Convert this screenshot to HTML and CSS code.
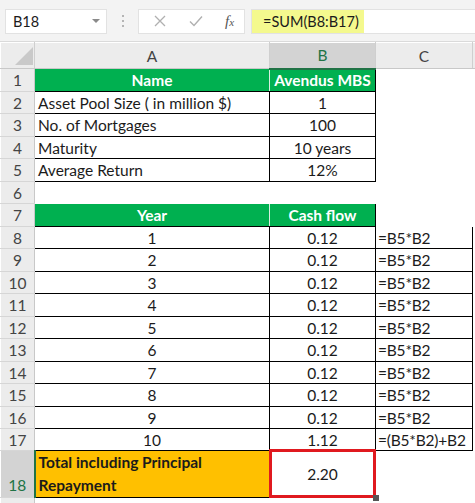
FILE: index.html
```html
<!DOCTYPE html>
<html lang="en">

<head>
    <meta charset="UTF-8">
    <meta name="viewport" content="width=device-width, initial-scale=1.0">
    <title>Avendus MBS</title>
    <link rel="stylesheet" href="styles.css">
</head>

<body>
    <div class="formula-bar">
        <div class="name-box">
            <span>B18</span>
            <svg class="drop" width="8" height="5" viewBox="0 0 8 5"><polygon points="0,0 8,0 4,4" fill="#8a8a8a"/></svg>
        </div>
        <div class="grip"><i></i><i></i><i></i></div>
        <div class="fx-buttons">
            <svg width="12" height="12" viewBox="0 0 12 12"><path d="M1 1 L11 11 M11 1 L1 11" stroke="#b0b0b0" stroke-width="1.3" fill="none"/></svg>
            <svg width="14" height="12" viewBox="0 0 14 12"><path d="M1 6.5 L5 10.5 L13 1.5" stroke="#b0b0b0" stroke-width="1.4" fill="none"/></svg>
            <span class="fx">f<small>x</small></span>
        </div>
        <div class="formula-input">
            <span class="formula-text">=SUM(B8:B17)</span>
        </div>
    </div>

    <table class="sheet">
        <colgroup>
            <col style="width:34px">
            <col style="width:235px">
            <col style="width:106px">
            <col style="width:97px">
            <col style="width:3px">
        </colgroup>
        <tr class="col-head">
            <th class="corner"><svg width="18" height="18" viewBox="0 0 18 18"><polygon points="18,0 18,18 0,18" fill="#c9c9c9"/></svg></th>
            <th>A</th>
            <th class="sel-col">B</th>
            <th>C</th>
            <th></th>
        </tr>
        <tr class="r23">
            <th class="rh">1</th>
            <td class="head head-a">Name</td>
            <td class="head head-b">Avendus MBS</td>
            <td></td><td></td>
        </tr>
        <tr class="r22">
            <th class="rh">2</th>
            <td class="box">Asset Pool Size ( in million $)</td>
            <td class="box num">1</td>
            <td></td><td></td>
        </tr>
        <tr class="r23">
            <th class="rh">3</th>
            <td class="box">No. of Mortgages</td>
            <td class="box num">100</td>
            <td></td><td></td>
        </tr>
        <tr class="r22">
            <th class="rh">4</th>
            <td class="box">Maturity</td>
            <td class="box num">10 years</td>
            <td></td><td></td>
        </tr>
        <tr class="r23">
            <th class="rh">5</th>
            <td class="box">Average Return</td>
            <td class="box num">12%</td>
            <td></td><td></td>
        </tr>
        <tr class="r22">
            <th class="rh">6</th>
            <td></td><td></td><td></td><td></td>
        </tr>
        <tr class="r23">
            <th class="rh">7</th>
            <td class="head head-a">Year</td>
            <td class="head head-b">Cash flow</td>
            <td></td><td></td>
        </tr>
        <tr class="r22"><th class="rh">8</th><td class="box num">1</td><td class="box num">0.12</td><td class="box formula">=B5*B2</td><td></td></tr>
        <tr class="r23"><th class="rh">9</th><td class="box num">2</td><td class="box num">0.12</td><td class="box formula">=B5*B2</td><td></td></tr>
        <tr class="r22"><th class="rh">10</th><td class="box num">3</td><td class="box num">0.12</td><td class="box formula">=B5*B2</td><td></td></tr>
        <tr class="r23"><th class="rh">11</th><td class="box num">4</td><td class="box num">0.12</td><td class="box formula">=B5*B2</td><td></td></tr>
        <tr class="r22"><th class="rh">12</th><td class="box num">5</td><td class="box num">0.12</td><td class="box formula">=B5*B2</td><td></td></tr>
        <tr class="r23"><th class="rh">13</th><td class="box num">6</td><td class="box num">0.12</td><td class="box formula">=B5*B2</td><td></td></tr>
        <tr class="r22"><th class="rh">14</th><td class="box num">7</td><td class="box num">0.12</td><td class="box formula">=B5*B2</td><td></td></tr>
        <tr class="r23"><th class="rh">15</th><td class="box num">8</td><td class="box num">0.12</td><td class="box formula">=B5*B2</td><td></td></tr>
        <tr class="r22"><th class="rh">16</th><td class="box num">9</td><td class="box num">0.12</td><td class="box formula">=B5*B2</td><td></td></tr>
        <tr class="r22"><th class="rh">17</th><td class="box num">10</td><td class="box num">1.12</td><td class="box formula">=(B5*B2)+B2</td><td></td></tr>
        <tr class="r47">
            <th class="rh sel-row">18</th>
            <td class="total-label">Total including Principal<br>Repayment</td>
            <td class="num total"><span>2.20</span></td>
            <td></td><td></td>
        </tr>
        <tr class="r22"><th class="rh"></th><td></td><td></td><td></td><td></td></tr>
    </table>
</body>

</html>
```

FILE: styles.css
```css
* {
    box-sizing: border-box;
}

body {
    margin: 0;
    padding: 0;
    width: 475px;
    height: 503px;
    overflow: hidden;
    background: #ffffff;
    font-family: Lato, "Liberation Sans", sans-serif;
    color: #1b1b1b;
}

/* formula bar */

.formula-bar {
    display: flex;
    align-items: center;
    height: 42px;
    padding: 9px 0 8px 5px;
    background: #f3f3f3;
    border-bottom: 1px solid #dadada;
}

.name-box {
    display: flex;
    align-items: center;
    justify-content: space-between;
    width: 102px;
    height: 25px;
    padding: 0 6px 0 7px;
    background: #ffffff;
    border: 1px solid #e2e2e2;
    font-size: 14.5px;
}

.grip {
    display: flex;
    flex-direction: column;
    gap: 3px;
    margin: 0 14px 0 15px;
}

.grip i {
    display: block;
    width: 2px;
    height: 2px;
    background: #b4b4b4;
}

.fx-buttons {
    display: flex;
    align-items: center;
    width: 107px;
    height: 25px;
    padding-left: 15px;
    gap: 23px;
    background: #ffffff;
    border: 1px solid #e2e2e2;
}

.fx {
    font-family: "Liberation Serif", serif;
    font-style: italic;
    font-size: 15px;
    color: #555555;
    margin-left: -1px;
}

.fx small {
    font-size: 11px;
}

.formula-input {
    flex: 1;
    height: 25px;
    margin-left: 6px;
    background: #ffffff;
    border: 1px solid #e2e2e2;
    border-right: none;
}

.formula-text {
    display: inline-block;
    height: 100%;
    width: 112px;
    padding: 3px 0 0 11px;
    background: #f4f98e;
    font-size: 14.5px;
}

/* sheet */

.sheet {
    table-layout: fixed;
    border-collapse: collapse;
    width: 475px;
    font-size: 15.5px;
}

.sheet td,
.sheet th {
    padding: 0 3px;
    white-space: nowrap;
    overflow: hidden;
    border: 1px solid transparent;
}

.col-head {
    height: 26px;
}

.col-head th {
    background: #ececec;
    font-weight: normal;
    color: #444444;
    border-right: 1px solid #cfcfcf;
    border-bottom: 1px solid #c8c8c8;
}

.col-head .corner {
    text-align: right;
    vertical-align: bottom;
    padding: 0 1px 3px 0;
}

.col-head .corner svg {
    display: block;
    margin-left: auto;
}

.col-head .sel-col {
    background: #d3d3d3;
    color: #217346;
    border-bottom: 2px solid #217346;
}

.r22 { height: 22px; }
.r23 { height: 23px; }
.r47 { height: 47px; }

.rh {
    background: #ececec;
    font-weight: normal;
    color: #444444;
    text-align: center;
    border-right: 1px solid #c8c8c8 !important;
    border-bottom: 1px solid #d6d6d6 !important;
}

.rh.sel-row {
    background: #d3d3d3;
    color: #217346;
    vertical-align: bottom;
    padding-bottom: 3px;
    border-right: 2px solid #217346 !important;
}

.box {
    border: 1px solid #000000 !important;
}

.sheet .formula {
    padding-left: 2px;
    letter-spacing: -0.2px;
}

.num {
    text-align: center;
}

.head {
    background: #00b050;
    color: #ffffff;
    font-weight: bold;
    text-align: center;
    border-bottom: 1px solid #000000 !important;
}

.head-a {
    border-right: 1px solid #d9efe0 !important;
}

.head-b {
    border-right: 1px solid #000000 !important;
}

.total-label {
    background: #ffc000;
    font-weight: bold;
    line-height: 23px;
    border-bottom: 1px solid #000000 !important;
}

.sheet .total {
    position: relative;
    overflow: visible;
}

.total::after {
    content: "";
    position: absolute;
    left: -1px;
    top: -2px;
    right: -1px;
    bottom: -1px;
    border: 3px solid #e0191f;
}

.total::before {
    content: "";
    position: absolute;
    right: -4px;
    bottom: -4px;
    width: 6px;
    height: 6px;
    background: #555555;
    z-index: 1;
}
```
